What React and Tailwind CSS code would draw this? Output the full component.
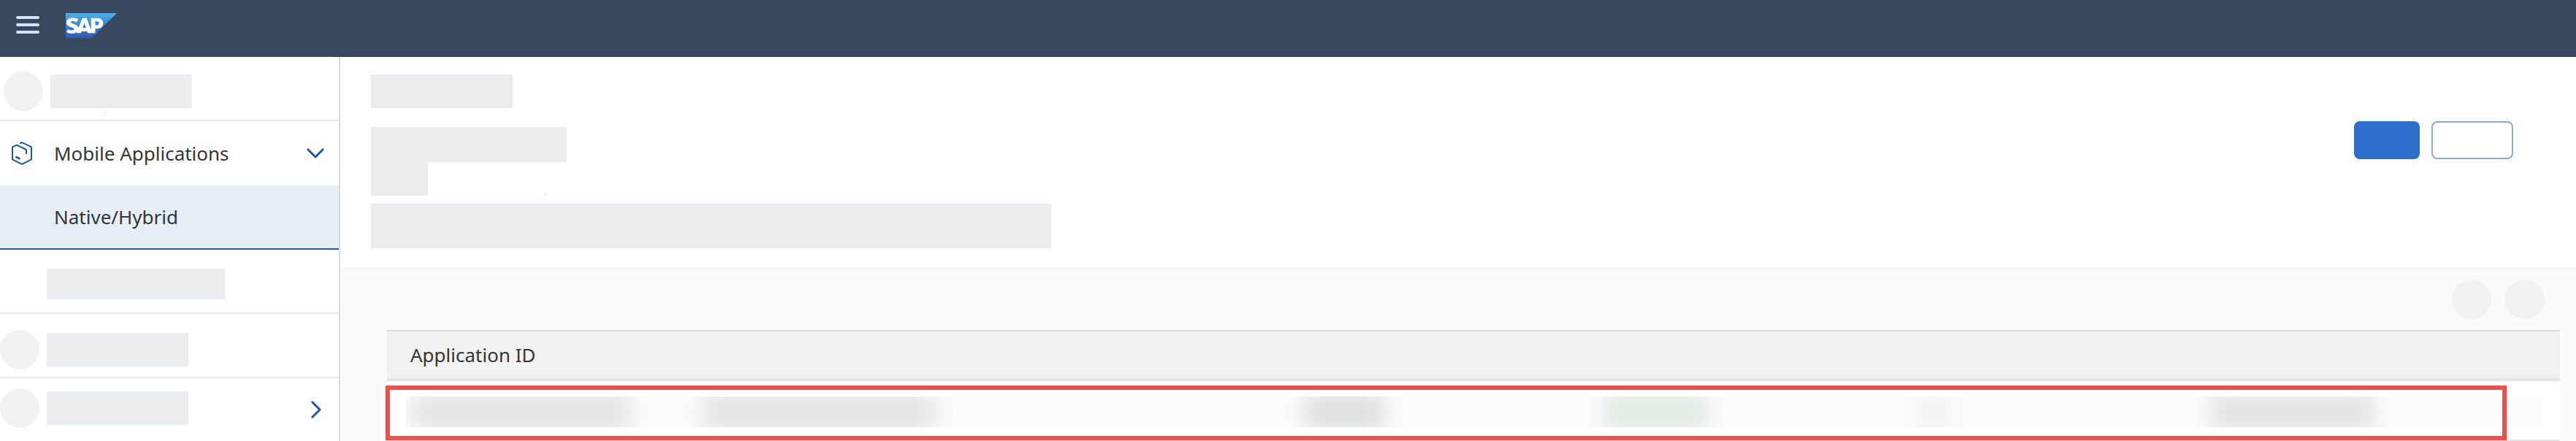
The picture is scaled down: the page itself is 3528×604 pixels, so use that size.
import { SiSap } from "react-icons/si";

function Bar({ className }) {
  return <div className={`shrink-0 bg-[#ebecee] ${className}`} />;
}

function Dot({ className = "" }) {
  return <div className={`size-[54px] shrink-0 rounded-full bg-[#f1f1f1] ${className}`} />;
}

function SapLogo() {
  return (
    <svg viewBox="0 6.064 24 11.872" preserveAspectRatio="none" className="h-[34px] w-[70px]" role="img" aria-label="SAP">
      <defs>
        <linearGradient id="sapBlue" x1="0" y1="0" x2="0" y2="1">
          <stop offset="0" stopColor="#4db1ea" />
          <stop offset="0.5" stopColor="#3a80cd" />
          <stop offset="1" stopColor="#2d5bb8" />
        </linearGradient>
      </defs>
      <polygon points="0.3,7.8 22,7.8 14,15.8 0.3,15.8" fill="#fff" />
      <SiSap size={24} fill="url(#sapBlue)" />
    </svg>
  );
}

function MobileAppIcon() {
  return (
    <svg viewBox="0 0 28 32" className="h-8 w-7 shrink-0" fill="none" stroke="#1f55a3" strokeWidth="2" strokeLinejoin="round" aria-hidden="true">
      <path d="M11 2.4 14 1.2 27 7.4V24.4L14 30.8 1 24.4V7.4L7 4.6 20 11V17" />
      <path d="M5.4 20.6 11.4 23.6" strokeWidth="2.6" />
    </svg>
  );
}

function Sidebar() {
  return (
    <nav className="z-20 w-[466px] shrink-0 border-r-2 border-[#d9d9d9] bg-white text-[26px] leading-9 text-[#32363a]">
      <div className="flex h-[88px] gap-[10px] border-b-2 border-[#e5e5e5] pt-5 pl-[5px]">
        <Dot />
        <div className="flex flex-col gap-1 pt-1">
          <Bar className="h-[46px] w-[194px]" />
          <div className="ml-[73px] h-2 w-[2px] bg-[#f3f3f3]" />
        </div>
      </div>
      <button type="button" aria-expanded="true" className="flex h-[88px] w-full items-center pr-5 pl-4 text-left">
        <MobileAppIcon />
        <span className="ml-[30px] flex-1">Mobile Applications</span>
        <svg viewBox="0 0 24 14" className="h-[14px] w-6" fill="none" stroke="#1f55a3" strokeWidth="3" strokeLinecap="round" strokeLinejoin="round" aria-hidden="true">
          <path d="M1.8 1.8 12 12 22.2 1.8" />
        </svg>
      </button>
      <a href="#native-hybrid" aria-current="page" className="flex h-[88px] items-center border-b-2 border-[#1f55a3] bg-[#e6eef8] pl-[74px]">
        Native/Hybrid
      </a>
      <div className="h-[88px] border-b-2 border-[#e5e5e5] pt-[26px] pl-16">
        <Bar className="h-[42px] w-[244px]" />
      </div>
      <div className="flex h-[88px] gap-[10px] border-b-2 border-[#e5e5e5] pt-[22px]">
        <Dot />
        <Bar className="mt-1 h-[46px] w-[194px]" />
      </div>
      <div className="flex h-[82px] items-center gap-[10px] pr-6">
        <Dot />
        <Bar className="h-[46px] w-[194px]" />
        <button type="button" aria-label="Expand section" className="ml-auto pt-1">
          <svg viewBox="0 0 14 24" className="h-6 w-[14px]" fill="none" stroke="#1f55a3" strokeWidth="3" strokeLinecap="round" strokeLinejoin="round" aria-hidden="true">
            <path d="M1.8 1.8 12 12 1.8 22.2" />
          </svg>
        </button>
      </div>
    </nav>
  );
}

function PageHeader() {
  return (
    <header className="z-10 flex h-[288px] items-start justify-between bg-white pt-6 pr-[86px] pl-[42px] shadow-[0_0_8px_rgba(0,0,0,0.08)]">
      <div>
        <Bar className="h-[46px] w-[194px]" />
        <Bar className="mt-[26px] h-12 w-[268px]" />
        <div className="flex items-end gap-[160px]">
          <Bar className="h-[46px] w-[78px]" />
          <Bar className="h-1 w-[2px]" />
        </div>
        <Bar className="mt-[11px] h-[61px] w-[932px]" />
      </div>
      <div className="mt-16 flex gap-4">
        <button type="button" aria-label="Primary action" className="h-[52px] w-[90px] rounded-lg bg-[#2d6dcb]" />
        <button type="button" aria-label="Secondary action" className="h-[52px] w-[112px] rounded-lg border-2 border-[#8ea8cf] bg-white" />
      </div>
    </header>
  );
}

function ApplicationsTable() {
  return (
    <div className="relative mt-[15px] mr-[22px] ml-16">
      <table className="w-full border-separate border-spacing-0 bg-white">
        <thead>
          <tr>
            <th scope="col" className="h-[70px] border-t-2 border-b-4 border-t-[#d9d9d9] border-b-[#e5e5e5] bg-[#f1f1f1] p-0 pl-8 text-left text-[26px] leading-9 font-normal text-[#32363a]">
              Application ID
            </th>
          </tr>
        </thead>
        <tbody>
          <tr>
            <td className="h-[82px] border-b-2 border-[#e5e5e5] pt-[4px] pr-[22px] pb-0 pl-[26px]">
              <div className="flex h-[42px] items-center overflow-hidden bg-[#fcfcfc]">
                <div className="grid h-14 w-full shrink-0 grid-cols-[8fr_300fr_97fr_320fr_504fr_112fr_298fr_145fr_281fr_52fr_353fr_226fr_232fr]">
                  <div className="col-start-2 bg-[#e3e4e4] blur-[14px]" />
                  <div className="col-start-4 bg-[#e3e4e4] blur-[14px]" />
                  <div className="col-start-6 bg-[#dfe0e0] blur-[14px]" />
                  <div className="col-start-8 bg-[#e1eae3] blur-[14px]" />
                  <div className="col-start-10 bg-[#f2f3f3] blur-[14px]" />
                  <div className="col-start-12 bg-[#e3e3e3] blur-[14px]" />
                </div>
              </div>
            </td>
          </tr>
        </tbody>
      </table>
      <div className="pointer-events-none absolute right-[73px] bottom-px -left-[2px] h-[75px] border-6 border-[#e9514b]" />
    </div>
  );
}

export default function App() {
  return (
    <div className="flex min-h-screen flex-col bg-white font-['Noto_Sans','Open_Sans',sans-serif]">
      <div className="flex h-[78px] items-start bg-[#39495e] pt-[18px] pl-[22px]">
        <button type="button" aria-label="Menu" className="mt-1 mr-9 flex flex-col gap-[6px]">
          <span className="h-1 w-8 rounded-full bg-[#d1e4fb]" />
          <span className="h-1 w-8 rounded-full bg-[#d1e4fb]" />
          <span className="h-1 w-8 rounded-full bg-[#d1e4fb]" />
        </button>
        <SapLogo />
      </div>
      <div className="flex flex-1">
        <Sidebar />
        <main className="flex min-w-0 flex-1 flex-col bg-[#fafafa]">
          <PageHeader />
          <div className="mt-[17px] mr-[43px] flex justify-end gap-[19px]">
            <Dot />
            <Dot />
          </div>
          <ApplicationsTable />
        </main>
      </div>
    </div>
  );
}
